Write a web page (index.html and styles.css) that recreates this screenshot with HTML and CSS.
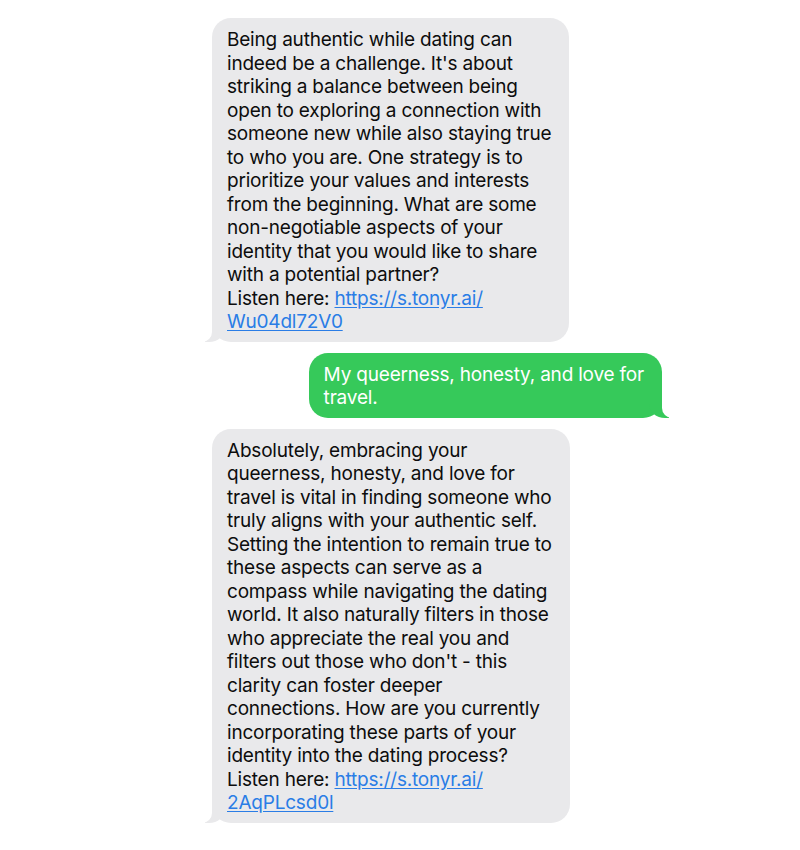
FILE: index.html
```html
<!DOCTYPE html>
<html lang="en">
<head>
<meta charset="utf-8">
<title>Messages</title>
<link rel="stylesheet" href="styles.css">
</head>
<body>
<main class="thread">
  <div class="bubble them">Being authentic while dating can<br>indeed be a challenge. It's about<br>striking a balance between being<br>open to exploring a connection with<br>someone new while also staying true<br>to who you are. One strategy is to<br>prioritize your values and interests<br>from the beginning. What are some<br>non-negotiable aspects of your<br>identity that you would like to share<br>with a potential partner?<br>Listen here: <a class="link" href="#">https://s.tonyr.ai/<br>Wu04dl72V0</a></div>
  <div class="bubble me">My queerness, honesty, and love for<br>travel.</div>
  <div class="bubble them">Absolutely, embracing your<br>queerness, honesty, and love for<br>travel is vital in finding someone who<br>truly aligns with your authentic self.<br>Setting the intention to remain true to<br>these aspects can serve as a<br>compass while navigating the dating<br>world. It also naturally filters in those<br>who appreciate the real you and<br>filters out those who don't - this<br>clarity can foster deeper<br>connections. How are you currently<br>incorporating these parts of your<br>identity into the dating process?<br>Listen here: <a class="link" href="#">https://s.tonyr.ai/<br>2AqPLcsd0l</a></div>
</main>
</body>
</html>
```
FILE: styles.css
```css
html, body {
  margin: 0;
  padding: 0;
  background: #ffffff;
}
body {
  font-family: Inter, "Liberation Sans", sans-serif;
  font-size: 19px;
  line-height: 23.5px;
  letter-spacing: -0.2px;
  color: #0d0d0d;
}
.thread {
  width: 465px;
  margin-left: 205px;
  padding-top: 18px;
  display: flex;
  flex-direction: column;
  gap: 11px;
}
.bubble {
  position: relative;
  width: fit-content;
  white-space: nowrap;
  padding: 10px 18px 8px 15px;
  border-radius: 19px;
}
.them {
  align-self: flex-start;
  margin-left: 7px;
  background: #e9e9eb;
}
.me {
  align-self: flex-end;
  margin-right: 8px;
  background: #36c95a;
  color: #ffffff;
}
.them::before,
.them::after,
.me::before,
.me::after {
  content: "";
  position: absolute;
  bottom: 0;
  height: 22px;
}
.them::before {
  left: -7px;
  width: 20px;
  background: #e9e9eb;
  border-bottom-right-radius: 16px 14px;
}
.them::after {
  left: -26px;
  width: 26px;
  background: #ffffff;
  border-bottom-right-radius: 10px;
}
.me::before {
  right: -7px;
  width: 20px;
  background: #36c95a;
  border-bottom-left-radius: 16px 14px;
}
.me::after {
  right: -26px;
  width: 26px;
  background: #ffffff;
  border-bottom-left-radius: 10px;
}
.link {
  color: #2a7de6;
  text-decoration: underline;
  text-underline-offset: 2px;
}
```
